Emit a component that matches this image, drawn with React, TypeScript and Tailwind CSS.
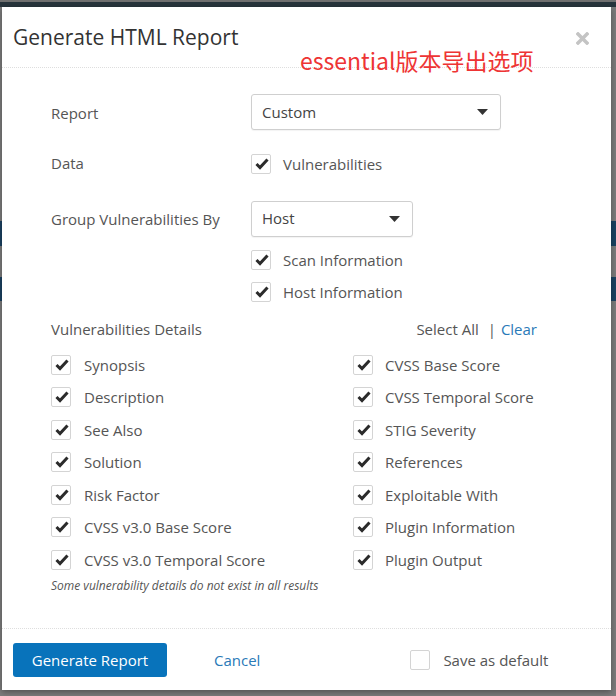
import { useState } from "react";

type CheckProps = {
  checked?: boolean;
  label?: string;
  gap?: string;
};

const CheckMark = () => (
  <svg width="14" height="12" viewBox="0 0 14 12" className="absolute left-[3px] top-[3px]">
    <path d="M1.5 6 L5 9.5 L12.5 1.5" fill="none" stroke="#2b2b2b" strokeWidth="3" strokeLinecap="butt" />
  </svg>
);

const CheckBox = ({ checked = true, label, gap = "gap-[12px]" }: CheckProps) => (
  <div className={`flex items-center ${gap}`}>
    <div className="relative w-[20px] h-[20px] border border-[#d4d4d4] rounded-[2px] bg-white shrink-0">
      {checked && <CheckMark />}
    </div>
    {label && <span className="text-[15px] text-[#555] leading-[20px]">{label}</span>}
  </div>
);

const Caret = () => (
  <svg width="11" height="6" viewBox="0 0 11 6">
    <path d="M0 0 L11 0 L5.5 6 Z" fill="#333" />
  </svg>
);

const Select = ({ value, width }: { value: string; width: string }) => (
  <div
    className={`${width} h-[36px] border border-[#cfcfcf] rounded-[3px] bg-white flex items-center justify-between pl-[10px] pr-[12px] shadow-[0_1px_1px_rgba(0,0,0,0.05)]`}
  >
    <span className="text-[15px] text-[#444]">{value}</span>
    <Caret />
  </div>
);

const leftDetails = [
  "Synopsis",
  "Description",
  "See Also",
  "Solution",
  "Risk Factor",
  "CVSS v3.0 Base Score",
  "CVSS v3.0 Temporal Score",
];

const rightDetails = [
  "CVSS Base Score",
  "CVSS Temporal Score",
  "STIG Severity",
  "References",
  "Exploitable With",
  "Plugin Information",
  "Plugin Output",
];

export default function App() {
  const [saveDefault] = useState(false);

  return (
    <div className="relative w-[616px] h-[696px] overflow-hidden bg-[#7b7b7b] font-['Open_Sans','Noto_Sans',sans-serif]">
      {/* page behind the overlay */}
      <div className="flex flex-col">
        <div className="h-[2px] bg-[#6f6f6f]" />
        <div className="h-[5px] bg-[#27343c]" />
        <div className="h-[214px]" />
        <div className="h-[25px] bg-[#1b4261]" />
        <div className="h-[31px]" />
        <div className="h-[24px] bg-[#1b4261]" />
      </div>

      {/* modal */}
      <div className="absolute left-[2px] top-[7px] w-[609px] h-[683px] bg-white flex flex-col shadow-[0_2px_6px_rgba(0,0,0,0.35)]">
        <div className="relative h-[61px] border-b border-dotted border-[#dedede] flex items-center pl-[11px]">
          <h1 className="text-[21px] text-[#333] font-normal leading-none">Generate HTML Report</h1>
          <svg width="13" height="13" viewBox="0 0 13 13" className="absolute left-[574px] top-[25px]">
            <path d="M2 2 L11 11 M11 2 L2 11" stroke="#c4c4c4" strokeWidth="3.5" strokeLinecap="square" />
          </svg>
        </div>

        <div className="flex flex-col pl-[49px]">
          <div className="flex items-center mt-[26px]">
            <div className="w-[200px] text-[15px] text-[#555] mt-[2px]">Report</div>
            <Select value="Custom" width="w-[250px]" />
          </div>

          <div className="flex items-center mt-[24px]">
            <div className="w-[200px] text-[15px] text-[#555] -mt-[2px]">Data</div>
            <CheckBox label="Vulnerabilities" />
          </div>

          <div className="flex items-center mt-[26px]">
            <div className="w-[200px] text-[15px] text-[#555] mt-[2px]">Group Vulnerabilities By</div>
            <Select value="Host" width="w-[162px]" />
          </div>

          <div className="flex flex-col pl-[200px] mt-[13px] gap-[12px]">
            <CheckBox label="Scan Information" />
            <CheckBox label="Host Information" />
          </div>

          <div className="flex items-center justify-between w-[486px] h-[20px] mt-[18px]">
            <span className="text-[15px] text-[#555]">Vulnerabilities Details</span>
            <span className="text-[15px] text-[#555]">
              Select All <span className="mx-[5px] text-[#555]">|</span>
              <span className="text-[#2a7ab8]">Clear</span>
            </span>
          </div>

          <div className="flex mt-[9px]">
            <div className="w-[302px] flex flex-col">
              {leftDetails.map((d) => (
                <div key={d} className="h-[32.5px] flex items-center">
                  <CheckBox label={d} gap="gap-[13px]" />
                </div>
              ))}
            </div>
            <div className="flex flex-col">
              {rightDetails.map((d) => (
                <div key={d} className="h-[32.5px] flex items-center">
                  <CheckBox label={d} />
                </div>
              ))}
            </div>
          </div>

          <div className="mt-[2px] text-[12px] italic text-[#555] leading-[16px]">
            Some vulnerability details do not exist in all results
          </div>
        </div>

        <div className="mt-auto border-t border-dotted border-[#dedede] pt-[14px] pb-[13px] pl-[11px] flex items-center">
          <button className="w-[154px] h-[34px] bg-[#0873bb] rounded-[3px] text-white text-[15px]">
            Generate Report
          </button>
          <span className="ml-[47px] text-[15px] text-[#2a7ab8]">Cancel</span>
          <div className="ml-[150px]">
            <CheckBox checked={saveDefault} label="Save as default" gap="gap-[13px]" />
          </div>
        </div>
      </div>

      {/* annotation */}
      <div className="absolute left-[300px] top-[45px] text-[23px] leading-[30px] text-[#ee3434] font-['Noto_Sans_CJK_SC',sans-serif]">
        essential版本导出选项
      </div>
    </div>
  );
}
